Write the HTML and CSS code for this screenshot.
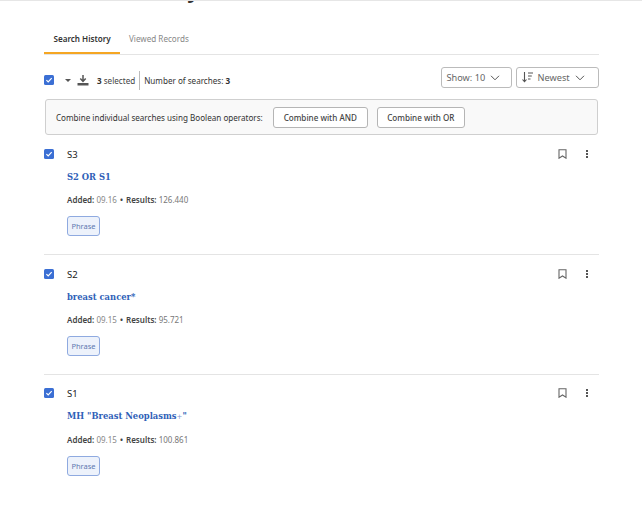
FILE: index.html
```html
<!DOCTYPE html>
<html lang="en">
<head>
<meta charset="utf-8">
<title>Search History</title>
<link rel="stylesheet" href="styles.css">
</head>
<body>
<svg class="defs" width="0" height="0" aria-hidden="true">
  <symbol id="check" viewBox="0 0 10 10"><path d="M2.400 5.200 4.200 7 7.700 3.200" fill="none" stroke="#fff" stroke-width="1.200"/></symbol>
  <symbol id="chev" viewBox="0 0 10 6"><path d="M1 .8 5 4.800 9 .8" fill="none" stroke="#555" stroke-width="1"/></symbol>
  <symbol id="mark" viewBox="0 0 9 10"><path d="M1 .7H8V9.200L4.500 7 1 9.200Z" fill="none" stroke="#666" stroke-width="1.100"/></symbol>
</svg>
<div class="topbar"><span class="title">Search History</span></div>
<main class="page">
  <nav class="tabs">
    <span class="tab active">Search History</span>
    <span class="tab">Viewed Records</span>
  </nav>
  <div class="toolbar">
    <div class="tools">
      <span class="box"><svg width="10" height="10"><use href="#check"/></svg></span>
      <span class="caret"></span>
      <svg class="dl" width="12" height="11" viewBox="0 0 12 11"><path d="M6 0v6M3.300 3.600 6 6.400l2.700-2.800" fill="none" stroke="#555" stroke-width="1.500"/><path d="M.5 8h11v2.500H.5z" fill="#555"/></svg>
      <span class="selected"><b>3</b> selected</span>
      <span class="count">Number of searches: <b>3</b></span>
    </div>
    <span class="select show">Show: 10 <svg width="10" height="6"><use href="#chev"/></svg></span>
    <span class="select newest">
      <svg width="11" height="11" viewBox="0 0 11 11"><path d="M2.500 0v9.500M.5 7.500l2 2.200 2-2.200" fill="none" stroke="#555" stroke-width="1.100"/><path d="M6 1h5M6 4h3.800M6 7h2.500" stroke="#555" stroke-width="1.100"/></svg>
      Newest <svg width="10" height="6"><use href="#chev"/></svg>
    </span>
  </div>
  <section class="combine">
    <span class="combine-label">Combine individual searches using Boolean operators:</span>
    <button class="btn">Combine with AND</button>
    <button class="btn">Combine with OR</button>
  </section>
  <article class="item">
    <span class="box"><svg width="10" height="10"><use href="#check"/></svg></span>
    <div class="body">
      <div class="id">S3</div>
      <a class="query">S2 OR S1</a>
      <div class="meta"><b>Added:</b> <span class="date">09.16</span> <b class="sep">•</b> <b>Results:</b> 126.440</div>
      <span class="pill">Phrase</span>
    </div>
    <div class="actions"><svg width="9" height="10"><use href="#mark"/></svg><span class="dots"><i></i><i></i><i></i></span></div>
  </article>
  <article class="item">
    <span class="box"><svg width="10" height="10"><use href="#check"/></svg></span>
    <div class="body">
      <div class="id">S2</div>
      <a class="query">breast cancer*</a>
      <div class="meta"><b>Added:</b> <span class="date">09.15</span> <b class="sep">•</b> <b>Results:</b> 95.721</div>
      <span class="pill">Phrase</span>
    </div>
    <div class="actions"><svg width="9" height="10"><use href="#mark"/></svg><span class="dots"><i></i><i></i><i></i></span></div>
  </article>
  <article class="item last">
    <span class="box"><svg width="10" height="10"><use href="#check"/></svg></span>
    <div class="body">
      <div class="id">S1</div>
      <a class="query">MH "Breast Neoplasms<span class="plus">+</span>"</a>
      <div class="meta"><b>Added:</b> <span class="date">09.15</span> <b class="sep">•</b> <b>Results:</b> 100.861</div>
      <span class="pill">Phrase</span>
    </div>
    <div class="actions"><svg width="9" height="10"><use href="#mark"/></svg><span class="dots"><i></i><i></i><i></i></span></div>
  </article>
</main>
</body>
</html>
```

FILE: styles.css
```css
* { box-sizing: border-box; }
html, body { margin: 0; padding: 0; background: #fff; }
body { font-family: "Noto Sans", sans-serif; color: #333; height: 505px; overflow: hidden; }
.defs { position: absolute; }
.topbar { height: 3px; overflow: hidden; display: flex; align-items: flex-end; padding-left: 44px; border-top: 1px solid #e6e6e6; }
.title { font-size: 22px; line-height: 22px; font-weight: 600; flex: none; color: #333; margin-bottom: 3px; }
.page { padding: 0 43px 0 44px; }
.tabs { display: flex; height: 52px; padding-top: 27px; border-bottom: 1px solid #e4e4e4; }
.tab { font-size: 8.100px; line-height: 18px; height: 24px; padding: 0 9px; color: #888; font-weight: 400; white-space: nowrap; }
.tab.active { color: #333; font-weight: 600; border-bottom: 2.500px solid #f5a623; width: 76px; padding: 0 0 0 9.500px; }
.toolbar { display: flex; align-items: center; height: 21px; margin-top: 12px; font-size: 8.100px; }
.tools { display: flex; align-items: center; margin-top: 5px; }
.box { width: 10px; height: 10px; background: #3b6fd4; border-radius: 1.500px; flex: none; display: block; }
.box svg { display: block; }
.caret { width: 0; height: 0; border: 3px solid transparent; border-top: 3px solid #555; border-bottom: 0; margin-left: 11px; }
.dl { margin-left: 6px; }
.selected { margin-left: 8px; color: #444; }
.selected b, .count b { font-weight: 700; color: #333; }
.count { margin-left: 4px; padding-left: 4px; border-left: 1px solid #bbb; height: 19px; line-height: 19px; color: #333; }
.select { height: 21px; border: 1px solid #bbb; border-radius: 3px; display: flex; align-items: center; color: #666; font-size: 9.200px; gap: 5px; padding: 0 4.500px; }
.show { margin-left: auto; width: 71px; }
.newest { margin-left: 4px; width: 83px; }
.combine { display: flex; align-items: center; height: 36px; margin: 11px 1px 0 1px; padding-left: 10px; background: #f9f9f9; border: 1px solid #cfcfcf; border-radius: 3px; font-size: 8.100px; }
.combine-label { color: #333; }
.btn { font: 500 8.100px "Noto Sans", sans-serif; color: #444; height: 21px; width: 95px; background: #fff; border: 1px solid #b5b5b5; border-radius: 3px; padding: 0; margin-left: 10px; white-space: nowrap; }
.btn + .btn { margin-left: 9px; width: 88px; }
.item { display: flex; height: 120px; border-bottom: 1px solid #e4e4e4; padding-top: 14px; }
.item.last { border-bottom: 0; padding-top: 13px; }
.body { margin-left: 13px; flex: 1; display: flex; flex-direction: column; align-items: flex-start; }
.id { font-size: 9.500px; line-height: 11px; color: #222; }
.query { font-family: "DejaVu Serif", serif; font-weight: 700; font-size: 8.400px; line-height: 12px; color: #2f5fb8; margin-top: 11px; }
.plus { font-size: 7px; color: #7f9ad2; font-weight: 400; }
.meta { font-size: 8px; line-height: 11px; margin-top: 11px; color: #777; }
.meta b { color: #444; font-weight: 600; }
.meta .sep { margin: 0 1px; }
.date { color: #888; }
.pill { margin-top: 11px; width: 33px; height: 20px; border: 1.500px solid #8faae0; border-radius: 3px; background: #edf2fb; color: #5d78b0; font-size: 7.500px; display: flex; align-items: center; justify-content: center; }
.actions { display: flex; gap: 19px; height: 10px; margin-right: 11px; align-items: center; }
.actions svg { display: block; }
.dots { display: flex; flex-direction: column; gap: 1px; width: 2px; }
.dots i { display: block; width: 2px; height: 2px; background: #555; }
```
